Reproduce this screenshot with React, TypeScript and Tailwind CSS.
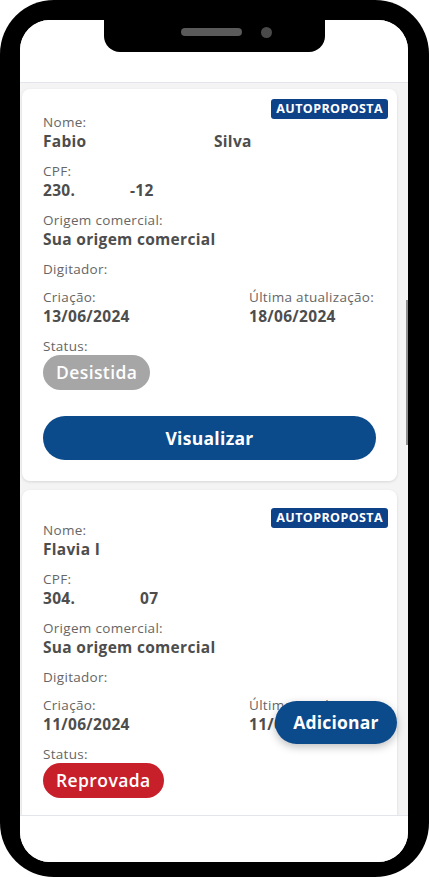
import React from 'react';

type Proposal = {
  id: string;
  nome: React.ReactNode;
  cpf: React.ReactNode;
  origem: string;
  criacao: string;
  atualizacao: string;
  status: string;
  statusClass: string;
  cardClass: string;
  badgeClass: string;
};

const proposals: Proposal[] = [
  {
    id: 'p1',
    nome: (
      <>
        <span className="inline-block w-[171px]">Fabio</span>Silva
      </>
    ),
    cpf: (
      <>
        <span className="inline-block w-[87px]">230.</span>-12
      </>
    ),
    origem: 'Sua origem comercial',
    criacao: '13/06/2024',
    atualizacao: '18/06/2024',
    status: 'Desistida',
    statusClass: 'bg-[#a6a6a6]',
    cardClass: 'pt-[24px]',
    badgeClass: 'top-[10px]',
  },
  {
    id: 'p2',
    nome: 'Flavia I',
    cpf: (
      <>
        <span className="inline-block w-[97px]">304.</span>07
      </>
    ),
    origem: 'Sua origem comercial',
    criacao: '11/06/2024',
    atualizacao: '11/06/2024',
    status: 'Reprovada',
    statusClass: 'bg-[#c8202b]',
    cardClass: 'pt-[31px]',
    badgeClass: 'top-[18px]',
  },
];

const Field: React.FC<{ label: string; value?: React.ReactNode }> = ({ label, value }) => (
  <div className="mb-[10px]">
    <div className="text-[13.5px] leading-[18px] tracking-[0.3px] text-[#666]">{label}</div>
    {value && (
      <div className="text-[15.5px] leading-[21px] tracking-[0.3px] font-bold text-[#4d4d4d]">{value}</div>
    )}
  </div>
);

const ProposalCard: React.FC<{ p: Proposal }> = ({ p }) => (
  <div className={`relative shrink-0 bg-white rounded-[8px] shadow-[0_1px_3px_rgba(0,0,0,0.12)] px-[21px] pb-[21px] ${p.cardClass}`}>
    <span className={`absolute right-[9px] ${p.badgeClass} h-[20px] px-[5px] rounded-[3px] bg-[#0d4188] text-white text-[12.5px] font-bold leading-[20px] tracking-[0.4px]`}>
      AUTOPROPOSTA
    </span>
    <Field label="Nome:" value={p.nome} />
    <Field label="CPF:" value={p.cpf} />
    <Field label="Origem comercial:" value={p.origem} />
    <Field label="Digitador:" />
    <div className="grid grid-cols-[206px_1fr]">
      <Field label="Criação:" value={p.criacao} />
      <Field label="Última atualização:" value={p.atualizacao} />
    </div>
    <div className="text-[13.5px] leading-[18px] tracking-[0.3px] text-[#666]">Status:</div>
    <span className={`inline-flex items-center h-[35px] px-[13px] rounded-full text-white text-[17.5px] tracking-[0.4px] font-semibold ${p.statusClass}`}>
      {p.status}
    </span>
    <button className="mt-[26px] w-full h-[44px] rounded-full bg-[#0b4a8b] text-white text-[17.5px] tracking-[0.3px] font-bold">
      Visualizar
    </button>
  </div>
);

export default function App() {
  return (
    <div className="w-[429px] h-[877px] bg-white" style={{ fontFamily: '"Open Sans", "Liberation Sans", sans-serif' }}>
      <div className="relative w-[429px] h-[877px] rounded-[54px] bg-black pt-[20px] pl-[20px] pr-[21px] pb-[15px]">
        <div className="relative h-full w-full rounded-[30px] overflow-hidden bg-white flex flex-col">
          <div className="h-[63px] shrink-0 bg-white border-b border-[#e2e5ea]" />
          <div className="flex-1 min-h-0 overflow-hidden bg-[#f4f4f4] pl-[2px] pr-[11px] pt-[6px] flex flex-col gap-[9px]">
            {proposals.map(p => (
              <ProposalCard key={p.id} p={p} />
            ))}
          </div>
          <div className="h-[47px] shrink-0 bg-white border-t border-[#e2e5ea]" />
          <div className="absolute right-0 top-[280px] h-[145px] w-[2px] bg-[#8f8f8f]" />
          <button className="absolute right-[11px] bottom-[118px] w-[122px] h-[43px] rounded-full bg-[#0b4a8b] text-white text-[17.5px] tracking-[0.2px] font-bold shadow-[0_3px_8px_rgba(0,0,0,0.25)]">
            Adicionar
          </button>
        </div>
        <div className="absolute left-[104px] top-0 w-[221px] h-[52px] bg-black rounded-b-[16px] flex items-center gap-[19px] pl-[77px] pt-[12px]">
          <div className="w-[61px] h-[8px] rounded-full bg-[#5a5a5a]" />
          <div className="w-[11px] h-[11px] rounded-full bg-[#4a4a4a]" />
        </div>
      </div>
    </div>
  );
}
